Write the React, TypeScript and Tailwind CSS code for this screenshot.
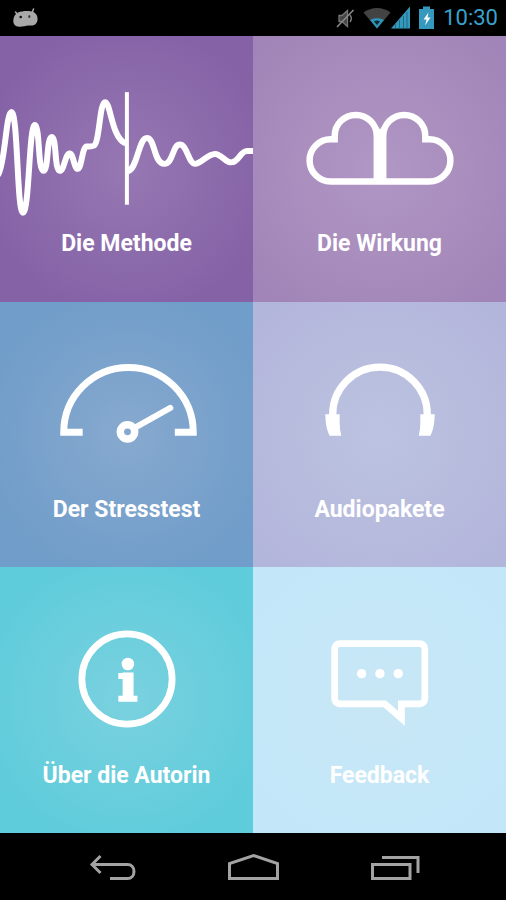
import React from 'react';

interface Tile {
  label: string;
  background: string;
  icon: React.ReactNode;
}

const WaveIcon = () => (
  <g strokeLinejoin="round">
    <path
      strokeWidth="6"
      d="M-2 139C5 130 6 76 11.500 76C18 76 17 177 23 177C29.500 177 29 89 35 89C40 89 38 135 43.500 135C49 135 46.500 101 52 101C57 101 54.500 135 60 135C64.500 135 65.500 117.500 70 117.500C73.500 117.500 74.500 133 78 133C82 133 82.500 110.500 87 110.500C90 110.500 92 111 94.500 109.500C100 106 100 66 105.500 66C111 66 112 102 126 107.500"
    />
    <path
      strokeWidth="6"
      d="M128 135.500C138 134 139 102 147.500 102C156 102 154 128 165 128C174 128 173 108.500 180.500 108.500C188 108.500 189 128 196 128C202 128 208 118 216 118C222 118 226 126.500 232 126.500C240 126.500 241 115 248 115H256"
    />
    <path strokeWidth="4" d="M127.400 56V169" />
  </g>
);

const CloudIcon = () => (
  <g strokeWidth="6.500">
    <path d="M124.300 145.700H78A21.200 21.200 0 0 1 78 103.300H82V100A21.150 21.150 0 0 1 124.300 100Z" />
    <path d="M130.700 145.700H177A21.200 21.200 0 0 0 177 103.300H173V100A21.150 21.150 0 0 0 130.700 100Z" />
    <path fill="#fff" stroke="none" d="M126 91L127.500 93.500L129 91V148H126Z" />
  </g>
);

const GaugeIcon = () => (
  <g>
    <path strokeWidth="7" d="M83 130.300H64A65 65 0 0 1 194 130.300H175.500" />
    <circle cx="128" cy="130" r="7.200" strokeWidth="7.500" />
    <path strokeWidth="6" strokeLinecap="round" d="M136 125.500L171 106" />
  </g>
);

const HeadphonesIcon = () => (
  <g>
    <path strokeWidth="7.300" d="M80 114V112.500A47.500 47.500 0 0 1 175 112.500V114" />
    <g fill="#fff" stroke="none">
      <path d="M72.600 112.300H87V120Q87 128 88.600 134H76.800Q72.600 125 72.600 112.300Z" />
      <path d="M182.400 112.300H168V120Q168 128 166.400 134H178.200Q182.400 125 182.400 112.300Z" />
    </g>
  </g>
);

const InfoIcon = () => (
  <g>
    <circle cx="127.500" cy="111" r="45.300" strokeWidth="6.800" />
    <circle cx="128.400" cy="96" r="6.300" fill="#fff" stroke="none" />
    <path strokeWidth="11" d="M128.600 104.500V133" />
    <path strokeWidth="6" strokeLinejoin="round" d="M118.800 108H130M118.800 131H138" />
  </g>
);

const FeedbackIcon = () => (
  <g>
    <path
      strokeWidth="6.800"
      d="M87 75.500H167.500A5 5 0 0 1 172.500 80.500V131A5 5 0 0 1 167.500 136H149V150.500L132.300 136H87A5 5 0 0 1 82 131V80.500A5 5 0 0 1 87 75.500Z"
    />
    <g fill="#fff" stroke="none">
      <circle cx="109" cy="105.700" r="4.700" />
      <circle cx="127.400" cy="105.700" r="4.700" />
      <circle cx="145.800" cy="105.700" r="4.700" />
    </g>
  </g>
);

const TILES: Tile[] = [
  {
    label: 'Die Methode',
    background: 'bg-[radial-gradient(circle,#9678b3_0%,#8562a6_80%)]',
    icon: <WaveIcon />,
  },
  {
    label: 'Die Wirkung',
    background: 'bg-[radial-gradient(circle,#b097c4_0%,#a285b8_90%)]',
    icon: <CloudIcon />,
  },
  {
    label: 'Der Stresstest',
    background: 'bg-[radial-gradient(circle,#87a9cf_0%,#709dc9_80%)]',
    icon: <GaugeIcon />,
  },
  {
    label: 'Audiopakete',
    background: 'bg-[radial-gradient(circle,#bcc3e1_0%,#b3b6db_90%)]',
    icon: <HeadphonesIcon />,
  },
  {
    label: 'Über die Autorin',
    background: 'bg-[radial-gradient(circle,#7ad1df_0%,#5fccdb_80%)]',
    icon: <InfoIcon />,
  },
  {
    label: 'Feedback',
    background: 'bg-[radial-gradient(circle,#c8e7f5_0%,#c3e7f9_80%)]',
    icon: <FeedbackIcon />,
  },
];

const StatusBar = () => (
  <header className="flex h-9 shrink-0 items-center bg-black pr-2 pl-3">
    <svg className="h-5 w-7" viewBox="0 0 28 20" fill="#a9a9a9">
      <path d="M3.500 4L6 7M21.500 1L20 5" stroke="#a9a9a9" strokeWidth="1.500" strokeLinecap="round" />
      <path d="M6 4.500C10 3 17 2.500 21.500 4C24.500 5.500 26 8.500 25.500 12C25 16 22 18 18 17.500C14 17 11 19 7 18.700C3.500 18.500 1.300 16.500 1.300 13C1.300 9 3 6 6 4.500Z" />
      <circle cx="8.700" cy="9" r="1.300" fill="#111" />
      <ellipse cx="17.300" cy="8.500" rx="1" ry="1.600" fill="#333" />
    </svg>

    {/* Lautlos, WLAN, Empfang, Akku */}
    <div className="ml-auto flex items-center">
      <svg className="mr-2 h-6 w-5" viewBox="0 0 20 24" fill="none" stroke="#777">
        <path d="M4 9.500H7L12.500 4.500V20.500L7 15.500H4Z" fill="#444" strokeWidth="1.300" />
        <path d="M15 9C16.500 11 16.500 14 15 16" strokeWidth="1.500" />
        <path d="M2 21L18.500 4" stroke="#8a8a8a" strokeWidth="1.600" />
      </svg>
      <svg className="h-6 w-7" viewBox="0 0 28 24">
        <path d="M.5 6.500C8 .5 20 .5 27.500 6.500L14 22.500Z" fill="#434343" />
        <path d="M7 14C11 11.500 17 11.500 21 14L14 22.500Z" fill="#2f93b8" />
        <path d="M11 15.500C13 14.300 15 14.300 17 15.500L14 19Z" fill="#0d2b36" />
      </svg>
      <svg className="mr-2 h-6 w-5" viewBox="0 0 20 24">
        <path d="M0 22.500L19 .5V22.500Z" fill="#3598bd" />
        <path d="M4.500 18V22.500M8.500 14V22.500M12.500 10V22.500M16 6V22.500" stroke="#1f6c8a" strokeWidth="1" />
      </svg>
      <svg className="mr-2 h-6 w-4" viewBox="0 0 16 24">
        <path d="M4 .5H11V3H15V23H0V3H4Z" fill="#3598bd" />
        <path d="M9.500 6.500L4.500 13.500H7.500L6 19.500L11.500 11.500H8.500Z" fill="#fff" />
      </svg>
      <time className="font-[Roboto,sans-serif] text-[22px] leading-9 text-[#38a3cd]">10:30</time>
    </div>
  </header>
);

const NavigationBar = () => (
  <nav className="grid h-[67px] shrink-0 grid-cols-3 bg-black px-[42px]">
    <button type="button" aria-label="Zurück" className="flex items-center justify-center">
      <svg className="h-7 w-13" viewBox="0 0 52 28" fill="none" stroke="#a3a3a3" strokeWidth="3">
        <path d="M14.500 3L6 11.500L14.500 20M6.500 11.500H41.500C45.500 11.500 48 14.500 48 18.500C48 22.500 45.500 25.500 41.500 25.500H24" />
      </svg>
    </button>
    <button type="button" aria-label="Startseite" className="flex items-center justify-center">
      <svg className="h-7 w-13" viewBox="0 0 52 28" fill="none" stroke="#a3a3a3" strokeWidth="3">
        <path d="M2.500 25.500V10.500L26.500 2.500L50.500 10.500V25.500Z" />
      </svg>
    </button>
    <button type="button" aria-label="Letzte Apps" className="flex items-center justify-center">
      <svg className="h-7 w-13" viewBox="0 0 52 28" fill="none" stroke="#a3a3a3" strokeWidth="3">
        <path d="M4.500 11.500H42V25.500H4.500ZM14 4.500H50V20" />
      </svg>
    </button>
  </nav>
);

export default function App() {
  return (
    <div className="flex min-h-screen flex-col bg-black">
      <StatusBar />
      <main className="grid flex-1 auto-rows-fr grid-cols-2">
        {TILES.map(tile => (
          <button
            key={tile.label}
            type="button"
            className={`flex flex-col items-center justify-center overflow-hidden pb-[39px] ${tile.background}`}
          >
            <svg
              className="h-[190px] w-full"
              viewBox="0 0 254 190"
              fill="none"
              stroke="#fff"
              strokeMiterlimit="10"
              aria-hidden="true"
            >
              {tile.icon}
            </svg>
            <span className="font-[Roboto,sans-serif] text-[23px] leading-9 font-bold text-white">
              {tile.label}
            </span>
          </button>
        ))}
      </main>
      <NavigationBar />
    </div>
  );
}
